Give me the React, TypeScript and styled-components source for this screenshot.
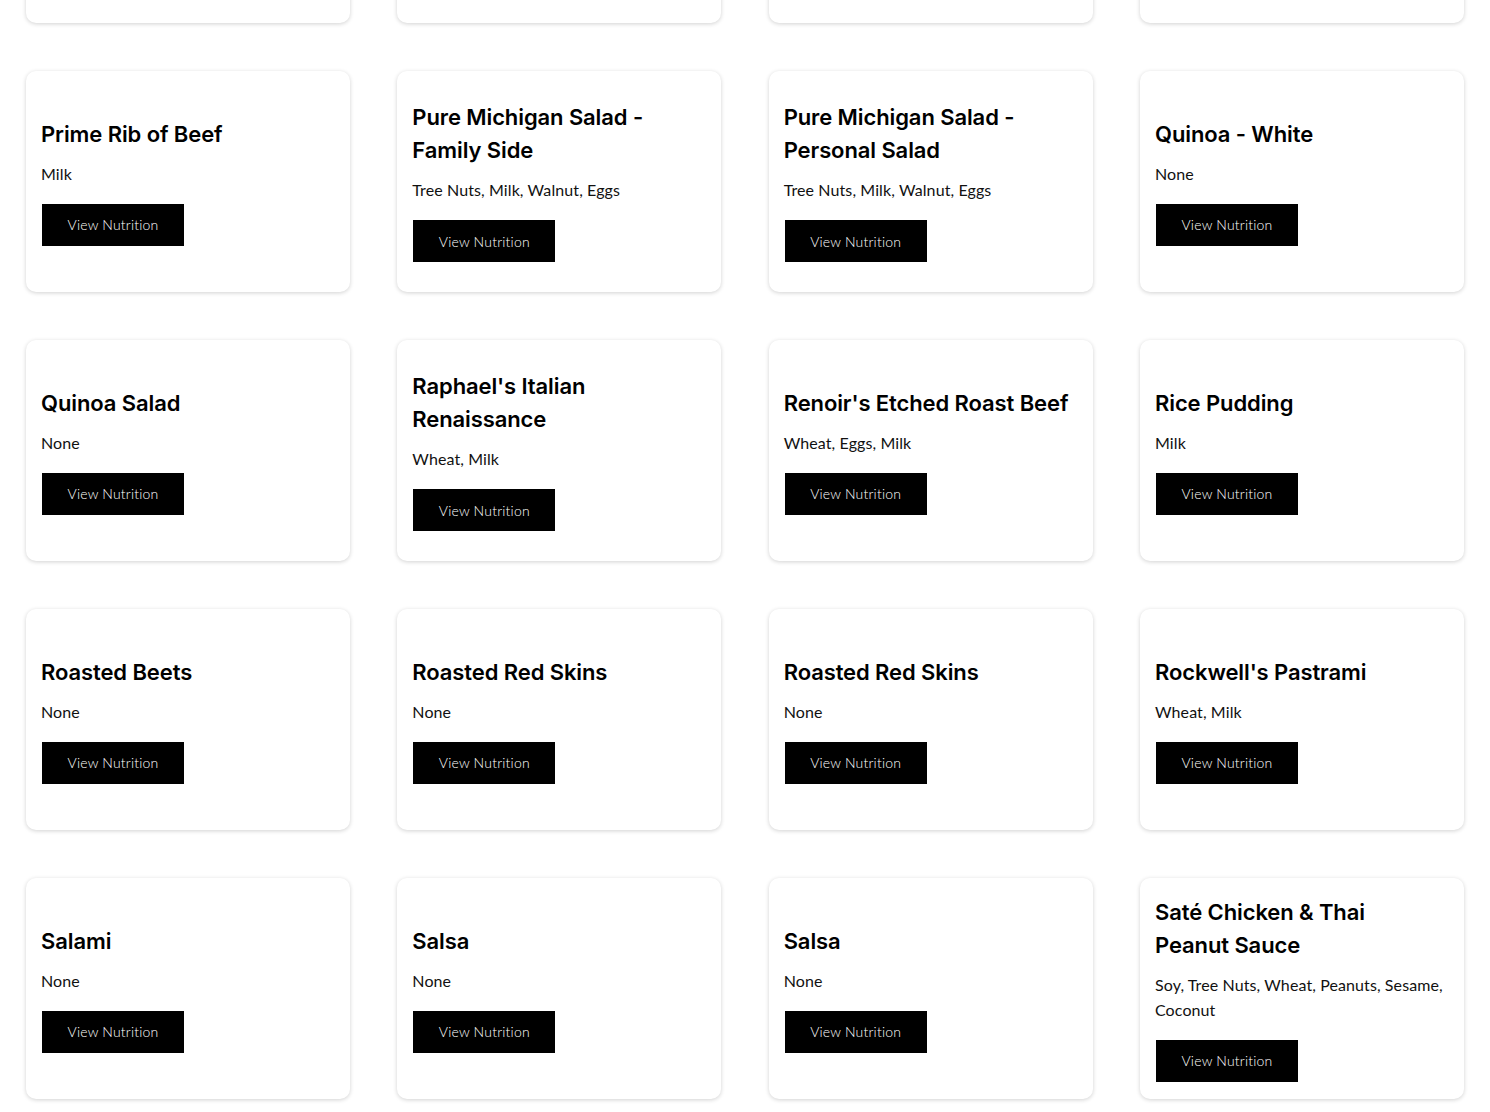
import React from "react";
import styled, { createGlobalStyle } from "styled-components";

const GlobalStyle = createGlobalStyle`
    html, body {
        margin: 0;
        padding: 0;
        background: #ffffff;
        overflow: hidden;
    }
`;

const Page = styled.div`
    width: 1490px;
    height: 1112px;
    overflow: hidden;
    background: #ffffff;
`;

const Grid = styled.div`
    display: grid;
    grid-template-columns: repeat(4, 324px);
    justify-content: space-between;
    row-gap: 48px;
    padding: 0 26px;
    margin-top: -198px;
`;

const Card = styled.div`
    box-sizing: border-box;
    height: 221px;
    display: flex;
    flex-direction: column;
    justify-content: center;
    align-items: flex-start;
    padding: 0 15px;
    background: #ffffff;
    border-radius: 10px;
    box-shadow: 0 1px 4px rgba(0, 0, 0, 0.18);
`;

const Title = styled.h3`
    margin: 0;
    max-width: 286px;
    font-family: "Inter", "Open Sans", sans-serif;
    font-weight: 600;
    font-size: 22px;
    line-height: 33px;
    color: #000000;
    letter-spacing: -0.1px;
`;

const Allergens = styled.p`
    margin: 10px 0 0;
    font-family: "Lato", "Open Sans", sans-serif;
    font-weight: 400;
    font-size: 16px;
    line-height: 25px;
    color: #111111;
    letter-spacing: 0.1px;
`;

const Button = styled.button`
    margin: 18px 0 0 1px;
    width: 142px;
    height: 42px;
    border: none;
    border-radius: 0;
    background: #000000;
    color: #ffffff;
    font-family: "Lato", "Open Sans", sans-serif;
    font-size: 14px;
    font-weight: 300;
    letter-spacing: 0.2px;
    cursor: pointer;
`;

type Item = { name: string; allergens: string };

const items: Item[] = [
    { name: "Potato Salad", allergens: "Eggs" },
    { name: "Pot Roast", allergens: "None" },
    { name: "Potato Wedges", allergens: "None" },
    { name: "Pretzel Roll", allergens: "Wheat" },
    { name: "Prime Rib of Beef", allergens: "Milk" },
    { name: "Pure Michigan Salad - Family Side", allergens: "Tree Nuts, Milk, Walnut, Eggs" },
    { name: "Pure Michigan Salad - Personal Salad", allergens: "Tree Nuts, Milk, Walnut, Eggs" },
    { name: "Quinoa - White", allergens: "None" },
    { name: "Quinoa Salad", allergens: "None" },
    { name: "Raphael's Italian Renaissance", allergens: "Wheat, Milk" },
    { name: "Renoir's Etched Roast Beef", allergens: "Wheat, Eggs, Milk" },
    { name: "Rice Pudding", allergens: "Milk" },
    { name: "Roasted Beets", allergens: "None" },
    { name: "Roasted Red Skins", allergens: "None" },
    { name: "Roasted Red Skins", allergens: "None" },
    { name: "Rockwell's Pastrami", allergens: "Wheat, Milk" },
    { name: "Salami", allergens: "None" },
    { name: "Salsa", allergens: "None" },
    { name: "Salsa", allergens: "None" },
    { name: "Saté Chicken & Thai Peanut Sauce", allergens: "Soy, Tree Nuts, Wheat, Peanuts, Sesame, Coconut" },
];

export default function App() {
    return (
        <Page>
            <GlobalStyle />
            <Grid>
                {items.map((item, i) => (
                    <Card key={i}>
                        <Title>{item.name}</Title>
                        <Allergens>{item.allergens}</Allergens>
                        <Button>View Nutrition</Button>
                    </Card>
                ))}
            </Grid>
        </Page>
    );
}
